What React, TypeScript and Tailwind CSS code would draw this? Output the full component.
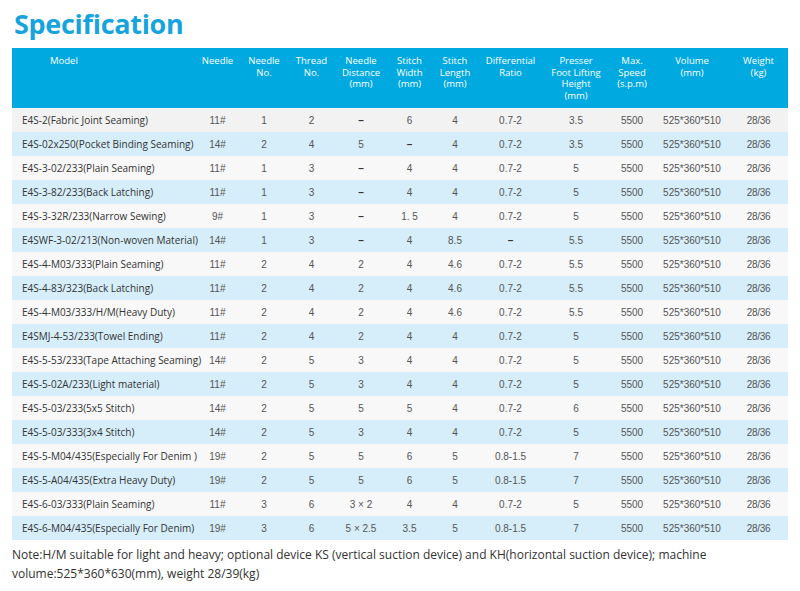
const headers: string[][] = [
  ["Model"],
  ["Needle"],
  ["Needle", "No."],
  ["Thread", "No."],
  ["Needle", "Distance", "(mm)"],
  ["Stitch", "Width", "(mm)"],
  ["Stitch", "Length", "(mm)"],
  ["Differential", "Ratio"],
  ["Presser", "Foot Lifting", "Height", "(mm)"],
  ["Max.", "Speed", "(s.p.m)"],
  ["Volume", "(mm)"],
  ["Weight", "(kg)"],
];

const rows: string[][] = [
  ["E4S-2(Fabric Joint Seaming)", "11#", "1", "2", "–", "6", "4", "0.7-2", "3.5"],
  ["E4S-02x250(Pocket Binding Seaming)", "14#", "2", "4", "5", "–", "4", "0.7-2", "3.5"],
  ["E4S-3-02/233(Plain Seaming)", "11#", "1", "3", "–", "4", "4", "0.7-2", "5"],
  ["E4S-3-82/233(Back Latching)", "11#", "1", "3", "–", "4", "4", "0.7-2", "5"],
  ["E4S-3-32R/233(Narrow Sewing)", "9#", "1", "3", "–", "1. 5", "4", "0.7-2", "5"],
  ["E4SWF-3-02/213(Non-woven Material)", "14#", "1", "3", "–", "4", "8.5", "–", "5.5"],
  ["E4S-4-M03/333(Plain Seaming)", "11#", "2", "4", "2", "4", "4.6", "0.7-2", "5.5"],
  ["E4S-4-83/323(Back Latching)", "11#", "2", "4", "2", "4", "4.6", "0.7-2", "5.5"],
  ["E4S-4-M03/333/H/M(Heavy Duty)", "11#", "2", "4", "2", "4", "4.6", "0.7-2", "5.5"],
  ["E4SMJ-4-53/233(Towel Ending)", "11#", "2", "4", "2", "4", "4", "0.7-2", "5"],
  ["E4S-5-53/233(Tape Attaching Seaming)", "14#", "2", "5", "3", "4", "4", "0.7-2", "5"],
  ["E4S-5-02A/233(Light material)", "11#", "2", "5", "3", "4", "4", "0.7-2", "5"],
  ["E4S-5-03/233(5x5 Stitch)", "14#", "2", "5", "5", "5", "4", "0.7-2", "6"],
  ["E4S-5-03/333(3x4 Stitch)", "14#", "2", "5", "3", "4", "4", "0.7-2", "5"],
  ["E4S-5-M04/435(Especially For Denim )", "19#", "2", "5", "5", "6", "5", "0.8-1.5", "7"],
  ["E4S-5-A04/435(Extra Heavy Duty)", "19#", "2", "5", "5", "6", "5", "0.8-1.5", "7"],
  ["E4S-6-03/333(Plain Seaming)", "11#", "3", "6", "3 × 2", "4", "4", "0.7-2", "5"],
  ["E4S-6-M04/435(Especially For Denim)", "19#", "3", "6", "5 × 2.5", "3.5", "5", "0.8-1.5", "7"],
];

const grid =
  "grid grid-cols-[183px_45px_48px_47px_52px_45px_46px_65px_66px_46px_74px_59px]";

export default function App() {
  return (
    <div className="w-[800px] h-[591px] bg-white px-[12px] pt-[4px] font-['Open_Sans',sans-serif]">
      <h1 className="text-[27px] leading-[40px] font-bold text-[#17a4dc] pl-[2px] tracking-[-0.3px]">
        Specification
      </h1>

      <div className="mt-[4px] w-[776px]">
        <div className={`${grid} h-[60px] bg-[#00a9e0] text-white text-[9.5px] leading-[11.5px] pt-[7px]`}>
          {headers.map((h, i) => (
            <div key={i} className={i === 0 ? "pl-[38px]" : "text-center"}>
              {h.map((line, j) => (
                <div key={j}>{line}</div>
              ))}
            </div>
          ))}
        </div>

        {rows.map((r, i) => (
          <div
            key={i}
            className={`${grid} h-[24px] items-center text-[10px] ${
              i % 2 === 1 ? "bg-[#d6eef9]" : i === 0 ? "bg-[#f2f2f2]" : "bg-[#f8f8f8]"
            }`}
          >
            <div className="pl-[10px] text-[#333] whitespace-nowrap text-[10px]">{r[0]}</div>
            {r.slice(1).map((v, j) => (
              <div
                key={j}
                className="text-center text-[#555] font-['Liberation_Sans',sans-serif]"
              >
                {v === "–" ? <span className="font-bold text-[#333]">–</span> : v}
              </div>
            ))}
            <div className="text-center text-[#555] font-['Liberation_Sans',sans-serif]">5500</div>
            <div className="text-center text-[#555] font-['Liberation_Sans',sans-serif]">525*360*510</div>
            <div className="text-center text-[#555] font-['Liberation_Sans',sans-serif] tracking-[-0.3px]">28/36</div>
          </div>
        ))}
      </div>

      <p className="mt-[5px] text-[12px] leading-[19px] text-[#333]">
        Note:H/M suitable for light and heavy; optional device KS (vertical suction device) and
        KH(horizontal suction device); machine volume:525*360*630(mm), weight 28/39(kg)
      </p>
    </div>
  );
}
